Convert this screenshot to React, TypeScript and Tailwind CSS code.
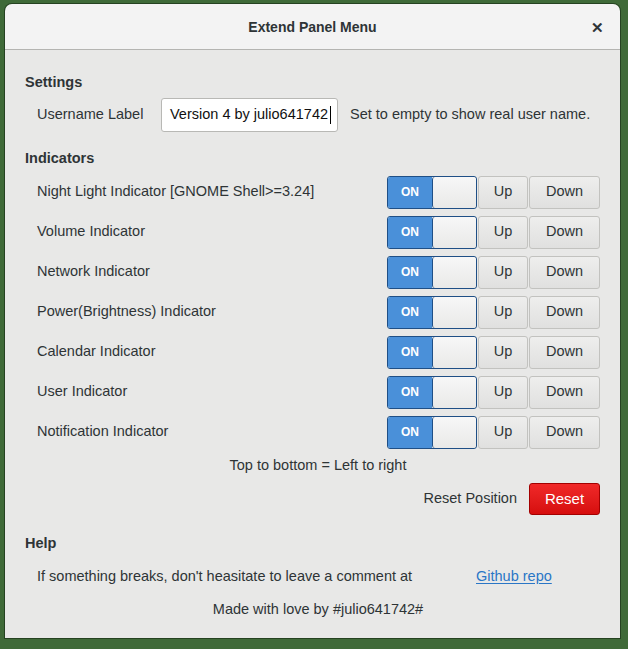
import React from "react";

const rows = [
  "Night Light Indicator [GNOME Shell>=3.24]",
  "Volume Indicator",
  "Network Indicator",
  "Power(Brightness) Indicator",
  "Calendar Indicator",
  "User Indicator",
  "Notification Indicator",
];

function Switch() {
  return (
    <div className="flex h-[33px] w-[90px] overflow-hidden rounded-[3px] border border-[#1f4f86]">
      <div className="flex w-[44px] items-center justify-center bg-[#4a90d9] text-[12px] font-bold text-white">
        ON
      </div>
      <div className="flex-1 rounded-[3px] border-l border-[#1f4f86] bg-gradient-to-b from-[#f7f7f7] to-[#e9e9e8]" />
    </div>
  );
}

function Btn({ children, w }: { children: React.ReactNode; w: string }) {
  return (
    <div
      className={`flex h-[33px] ${w} items-center justify-center rounded-[3px] border border-[#c2c2bf] bg-gradient-to-b from-[#eeeeed] to-[#e0e0df] text-[#2e3436]`}
    >
      {children}
    </div>
  );
}

export default function App() {
  return (
    <div
      className="h-[649px] w-[628px] bg-[#3f6a38] pl-[5px] pt-[4px] text-[14.5px] text-[#2e3436]"
      style={{ fontFamily: '"Liberation Sans", Arial, sans-serif' }}
    >
      <div className="flex h-[634px] w-[615px] flex-col overflow-hidden rounded-t-[7px] shadow-[0_0_0_1px_rgba(20,40,18,0.6)]">
        <div className="relative flex h-[46px] items-center justify-center border-b border-[#b4b4b1] bg-[#f3f3f3] pt-[2px]">
          <span className="text-[14px] font-bold text-[#2e3436]">Extend Panel Menu</span>
          <span className="absolute right-[16px] top-[13px] text-[15px] font-bold text-[#2e3436]">✕</span>
        </div>
        <div className="flex-1 bg-[#e8e8e7] px-[20px] pt-[18px]">
          <div className="flex h-[30px] items-center font-bold">Settings</div>
          <div className="flex h-[34px] items-center pl-[12px]">
            <div className="w-[124px]">Username Label</div>
            <div className="flex h-[34px] w-[177px] items-center rounded-[3px] border border-[#b8b8b5] bg-white pl-[8px] text-[#111]">
              <span>Version 4 by julio641742</span>
              <span className="ml-[2px] inline-block h-[18px] w-[1px] bg-black" />
            </div>
            <div className="ml-[12px]">Set to empty to show real user name.</div>
          </div>
          <div className="mt-[14px] flex h-[26px] items-center font-bold">Indicators</div>
          {rows.map((r) => (
            <div key={r} className="flex h-[40px] items-center pl-[12px]">
              <div className="flex-1">{r}</div>
              <div className="flex gap-[1px]">
                <Switch />
                <Btn w="w-[50px]">Up</Btn>
                <Btn w="w-[71px]">Down</Btn>
              </div>
            </div>
          ))}
          <div className="flex h-[28px] items-center justify-center pl-[11px]">Top to bottom = Left to right</div>
          <div className="mt-[1px] flex h-[36px] items-center justify-end gap-[12px]">
            <span>Reset Position</span>
            <div className="flex h-[32px] w-[71px] items-center justify-center rounded-[3px] border border-[#a30000] bg-gradient-to-b from-[#f02828] to-[#d60d0d] text-[15px] text-white">
              Reset
            </div>
          </div>
          <div className="mt-[12px] flex h-[30px] items-center font-bold">Help</div>
          <div className="mt-[2px] flex h-[32px] items-center pl-[12px]">
            <div className="w-[439px]">If something breaks, don't heasitate to leave a comment at</div>
            <span className="text-[#2a76c6] underline underline-offset-2">Github repo</span>
          </div>
          <div className="flex h-[34px] items-center justify-center pl-[11px]">Made with love by #julio641742#</div>
        </div>
      </div>
    </div>
  );
}
